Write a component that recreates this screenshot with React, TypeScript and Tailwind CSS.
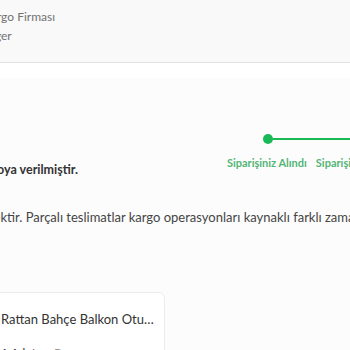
const font = { fontFamily: "Lato, 'Noto Sans', sans-serif" };

const Stepper = () => {
  return (
    <div className="flex flex-col items-start">
      <div className="ml-[36px] flex h-[10px] w-[120px] items-center">
        <span className="h-[10px] w-[10px] shrink-0 rounded-full bg-[#19b955]" />
        <span className="h-[2px] flex-1 bg-[#19b955]" />
      </div>
      <div className="mt-[12px] flex gap-[9px] whitespace-nowrap text-[11px] font-bold leading-[13px] text-[#53b576]">
        <span>Siparişiniz Alındı</span>
        <span>Siparişiniz Hazırlanıyor</span>
      </div>
    </div>
  );
};

export default function App() {
  return (
    <div
      className="h-[350px] w-[350px] overflow-hidden bg-[#fcfcfc]"
      style={font}
    >
      <div className="h-[63px] border-b border-[#e2e2e2] bg-[#f9f9f9] pt-[10px]">
        <div className="-ml-[17px] flex flex-col gap-[5px] whitespace-nowrap text-[12px] leading-[14px] text-[#727272]">
          <span>Kargo Firması</span>
          <span>Diğer</span>
        </div>
      </div>
      <div className="h-[15px] bg-white" />

      <div className="mt-[56px] flex h-[44px] items-start">
        <p className="-ml-[86px] mt-[28px] whitespace-nowrap text-[12.5px] font-bold leading-[16px] text-[#333]">
          Siparişiniz kargoya verilmiştir.
        </p>
        <div className="-mr-[77px] ml-auto">
          <Stepper />
        </div>
      </div>

      <p className="mt-[29px] -ml-[36px] whitespace-nowrap text-[13px] leading-[20px] text-[#444]">
        gelecektir. Parçalı teslimatlar kargo operasyonları kaynaklı farklı zamanlarda olabilir.
      </p>

      <div className="mt-[65px] -ml-[16px] h-[80px] w-[181px] rounded-[6px] border border-[#ececec] bg-white pt-[16px] pl-[16px] pr-[6px]">
        <p className="truncate whitespace-nowrap text-[13px] leading-[20px] text-[#333]">
          Rattan Bahçe Balkon Oturma Grubu
        </p>
        <div className="mt-[17px] flex gap-[18px] text-[12px] leading-[14px] text-[#999]">
          <span className="text-[#333]">1 Adet</span>
          <span>Beyaz</span>
        </div>
      </div>
    </div>
  );
}
